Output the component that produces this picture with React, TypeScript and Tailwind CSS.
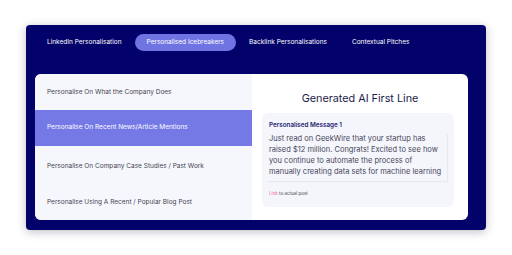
const TABS = ['LinkedIn Personalisation', 'Personalised Icebreakers', 'Backlink Personalisations', 'Contextual Pitches'];

const OPTIONS = [
  'Personalise On What the Company Does',
  'Personalise On Recent News/Article Mentions',
  'Personalise On Company Case Studies / Past Work',
  'Personalise Using A Recent / Popular Blog Post',
];

export default function App() {
  const activeTab = 1;
  const activeOption = 1;

  return (
    <div className="w-[512px] h-[255px] bg-white pt-[25px] pl-[26px]" style={{ fontFamily: 'Inter, "Noto Sans", sans-serif' }}>
      <div className="w-[460px] h-[205px] bg-[#03026a] rounded-[4px] shadow-[0_2px_10px_rgba(0,0,40,0.25)] pt-[9px] pl-[9px] pr-[18px] pb-[10px] flex flex-col">
        {/* Tabs */}
        <div className="flex gap-px h-[17px]">
          {TABS.map((t, i) => (
            <div
              key={t}
              className={`px-3 flex items-center rounded-full text-[6.5px] leading-none whitespace-nowrap ${
                i === activeTab ? 'bg-[#7074e2] text-white' : 'text-white'
              }`}
            >
              {t}
            </div>
          ))}
        </div>

        {/* Content card */}
        <div className="mt-[23px] flex-1 bg-white rounded-[6px] flex overflow-hidden">
          <div className="w-[217px] bg-[#f6f7fd] flex flex-col">
            {OPTIONS.map((o, i) => (
              <div
                key={o}
                className={`h-[37px] flex items-center pl-3 text-[6.5px] leading-none ${
                  i === activeOption ? 'bg-[#7479e6] text-white h-[34px] mb-[3px]' : 'text-[#44444f]'
                }`}
              >
                {o}
              </div>
            ))}
          </div>

          <div className="flex-1 flex flex-col items-center pt-[20px]">
            <h2 className="text-[10.8px] leading-none text-[#1d1d4a]">Generated AI First Line</h2>
            <div className="mt-[8px] ml-[-4px] w-[192px] h-[94px] bg-[#f5f6fc] rounded-[6px] pt-[9px] pl-[7px] pr-[7px]">
              <div className="text-[6.3px] leading-none font-semibold text-[#1c1c6e]">Personalised Message 1</div>
              <div className="mt-[5px] w-[181px] -ml-[3px] pl-[3px] pb-[4px] shadow-[1px_1px_1px_rgba(0,0,0,0.05)]">
                <p className="w-[175px] text-[7.5px] leading-[11px] text-[#45455a]">
                  Just read on GeekWire that your startup has raised $12 million. Congrats! Excited to see how you continue to automate the process of manually creating data sets for machine learning
                </p>
              </div>
              <div className="mt-[11px] text-[4.5px] leading-none text-[#444]">
                <span className="text-[#f0628f]">Link</span> to actual post
              </div>
            </div>
          </div>
        </div>
      </div>
    </div>
  );
}
